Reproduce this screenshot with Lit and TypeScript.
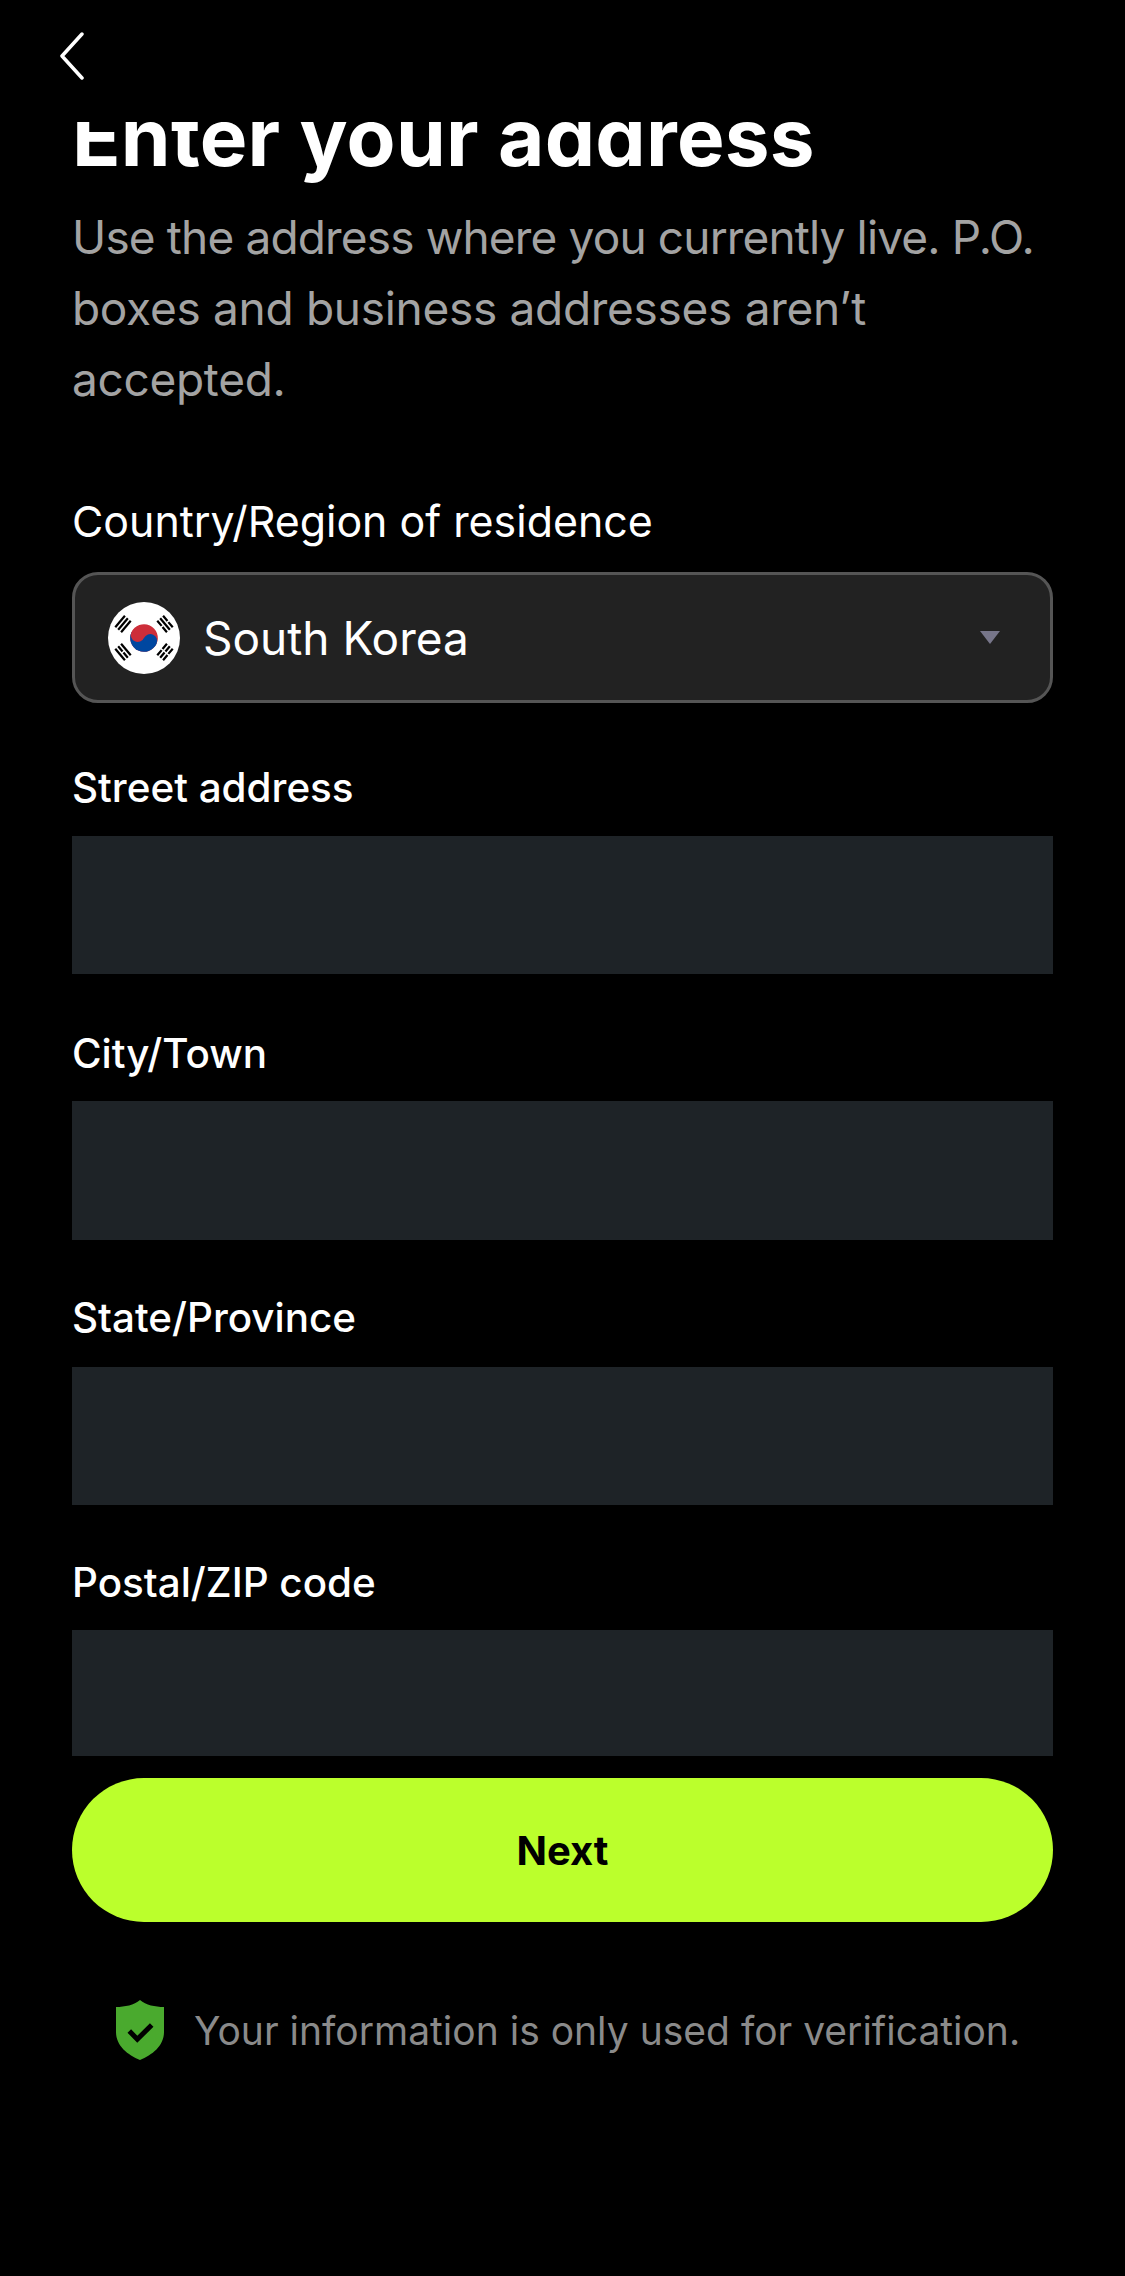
import { LitElement, html, css, svg } from "lit";
import { customElement } from "lit/decorators.js";

@customElement("app-root")
export class AppRoot extends LitElement {
  static styles = css`
    :host { display: block; width: 1125px; height: 2276px; background: #000; color: #fff; font-family: Inter, "Liberation Sans", sans-serif; overflow: hidden; }
    .header { height: 122px; display: flex; align-items: flex-start; padding: 32px 0 0 58px; box-sizing: border-box; }
    .back { width: 28px; height: 48px; display: block; }
    .content { padding: 0 72px; display: flex; flex-direction: column; }
    .title-clip { height: 70px; overflow: hidden; }
    h1 { margin: -25px 0 0; font-size: 80px; line-height: 80px; font-weight: 700; letter-spacing: 0.25px; white-space: nowrap; }
    .lead { margin: 10px 0 0; font-size: 46px; line-height: 71px; color: #a3a3a3; font-weight: 400; letter-spacing: -0.85px; white-space: nowrap; }
    .lead span { display: block; }
    .lead .wide { letter-spacing: -0.3px; }
    .country-label { margin: 81px 0 0; font-size: 42.9px; line-height: 50px; font-weight: 400; }
    .select { margin-top: 26px; height: 131px; box-sizing: border-box; border: 3px solid #555; border-radius: 26px; background: #222; display: flex; align-items: center; padding: 0 50px 0 33px; }
    .flag { width: 72px; height: 72px; flex: none; }
    .select span { margin-left: 23px; font-size: 46px; flex: 1; }
    .caret { width: 20px; height: 13px; flex: none; }
    .field { display: flex; flex-direction: column; }
    .field label { font-size: 40.4px; line-height: 48px; font-weight: 500; }
    .box { background: #1e2327; }
    .next { margin-top: 22px; height: 144px; border: 0; padding: 0; background: #bbff2c; border-radius: 72px; color: #000; font: 700 40px Inter, "Liberation Sans", sans-serif; }
    .note { margin-top: 78px; display: flex; align-items: center; gap: 30px; padding-left: 44px; color: #8a8a8a; font-size: 39px; white-space: nowrap; }
    .shield { width: 48px; height: 60px; flex: none; }
  `;

  private field(label: string, top: number, gap: number, height: number) {
    return html`<div class="field" style="margin-top:${top}px">
      <label>${label}</label>
      <div class="box" style="height:${height}px;margin-top:${gap}px"></div>
    </div>`;
  }

  private bars(x: number, y: number, angle: number, kinds: boolean[]) {
    return svg`<g transform="translate(${x} ${y}) rotate(${angle})" stroke="#000" stroke-width="2.2">
      ${kinds.map(
        (broken, i) => svg`<path d="M-7.5 ${(i - 1) * 3.8}H7.5" stroke-dasharray=${broken ? "6.8 1.4" : "none"} />`
      )}
    </g>`;
  }

  render() {
    return html`
      <div class="header">
        <svg class="back" viewBox="0 0 28 48" fill="none" stroke="#fff" stroke-width="3.5" stroke-linecap="round" stroke-linejoin="round"><path d="M24 2 L4 24 L24 46"/></svg>
      </div>
      <div class="content">
        <div class="title-clip"><h1>Enter your address</h1></div>
        <p class="lead">
          <span>Use the address where you currently live. P.O.</span>
          <span class="wide">boxes and business addresses aren’t</span>
          <span class="wide">accepted.</span>
        </p>
        <div class="country-label">Country/Region of residence</div>
        <div class="select">
          <svg class="flag" viewBox="0 0 72 72">
            <circle cx="36" cy="36" r="36" fill="#fff"/>
            <g transform="rotate(25 36 36)">
              <circle cx="36" cy="36" r="13.8" fill="#cd2e3a"/>
              <path d="M22.2 36a13.8 13.8 0 0 0 27.6 0z" fill="#0047a0"/>
              <circle cx="29.1" cy="36" r="6.9" fill="#cd2e3a"/>
              <circle cx="42.9" cy="36" r="6.9" fill="#0047a0"/>
            </g>
            ${this.bars(15, 22, -50, [false, false, false])}
            ${this.bars(57, 22, 50, [true, false, true])}
            ${this.bars(15, 50, 50, [false, true, false])}
            ${this.bars(57, 50, -50, [true, true, true])}
          </svg>
          <span>South Korea</span>
          <svg class="caret" viewBox="0 0 20 13"><path d="M0 0H20L10 13z" fill="#77768a"/></svg>
        </div>
        ${this.field("Street address", 61, 24, 138)}
        ${this.field("City/Town", 56, 23, 139)}
        ${this.field("State/Province", 54, 25, 138)}
        ${this.field("Postal/ZIP code", 54, 23, 126)}
        <button class="next">Next</button>
        <div class="note">
          <svg class="shield" viewBox="0 0 48 60">
            <path d="M24 0C30 5 39 7 48 7V32C48 46 36 55 24 60C12 55 0 46 0 32V7C9 7 18 5 24 0z" fill="#4aaa2e"/>
            <path d="M13.3 31l8 8.3L35.7 25" fill="none" stroke="#000" stroke-width="5"/>
          </svg>
          <span>Your information is only used for verification.</span>
        </div>
      </div>
    `;
  }
}
